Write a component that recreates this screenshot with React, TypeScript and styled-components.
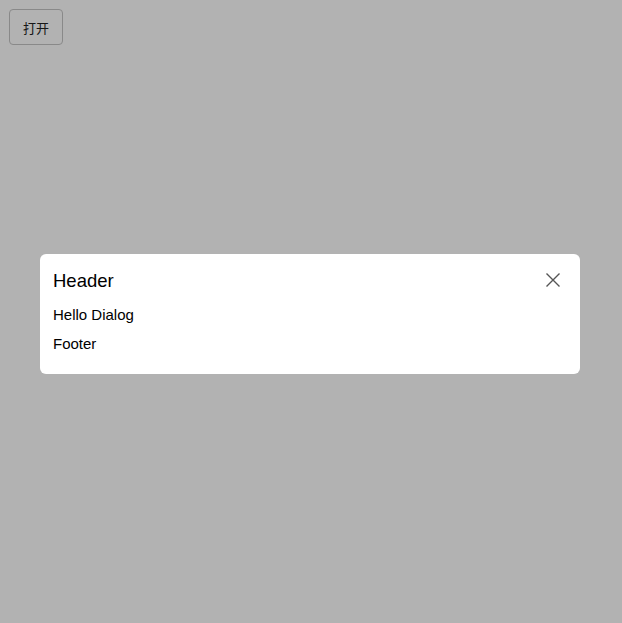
import React, { useState } from "react";
import styled, { createGlobalStyle } from "styled-components";

const Global = createGlobalStyle`
  html, body { margin: 0; padding: 0; background: #fff; }
  body { font-family: "Liberation Sans", Arial, "Noto Sans CJK SC", sans-serif; }
`;

const Page = styled.div`
  padding: 9px;
`;

const OpenButton = styled.button`
  width: 54px;
  height: 36px;
  border: 1px solid #c4c4c4;
  border-radius: 4px;
  background: #fff;
  color: #222;
  font-size: 13px;
  font-family: "Noto Sans CJK SC", sans-serif;
  cursor: pointer;
  padding: 0;
`;

const Overlay = styled.div`
  position: fixed;
  inset: 0;
  background: rgba(0, 0, 0, 0.3);
  display: flex;
  align-items: center;
  justify-content: center;
  padding-right: 2px;
`;

const Dialog = styled.div`
  width: 540px;
  background: #fff;
  border-radius: 6px;
  padding: 14px 13px 20px;
  box-sizing: border-box;
  display: flex;
  flex-direction: column;
  color: #000;
  margin-top: 4px;
`;

const HeaderRow = styled.div`
  display: flex;
  align-items: flex-start;
  justify-content: space-between;
`;

const Title = styled.div`
  font-size: 18.5px;
  line-height: 26px;
`;

const Close = styled.button`
  border: none;
  background: transparent;
  padding: 0;
  margin: 3px 5px 0 0;
  width: 18px;
  height: 18px;
  display: flex;
  align-items: center;
  justify-content: center;
  cursor: pointer;
`;

const Body = styled.div`
  font-size: 15px;
  line-height: 20px;
  margin-top: 11px;
`;

const Footer = styled.div`
  font-size: 15px;
  line-height: 20px;
  margin-top: 9px;
`;

export default function App() {
  const [open, setOpen] = useState(true);
  return (
    <>
      <Global />
      <Page>
        <OpenButton onClick={() => setOpen(true)}>打开</OpenButton>
      </Page>
      {open && (
        <Overlay>
          <Dialog>
            <HeaderRow>
              <Title>Header</Title>
              <Close onClick={() => setOpen(false)} aria-label="close">
                <svg width="16" height="16" viewBox="0 0 16 16">
                  <path d="M1.5 1.5 L14.5 14.5 M14.5 1.5 L1.5 14.5" stroke="#555" strokeWidth="1.4" fill="none" />
                </svg>
              </Close>
            </HeaderRow>
            <Body>Hello Dialog</Body>
            <Footer>Footer</Footer>
          </Dialog>
        </Overlay>
      )}
    </>
  );
}
